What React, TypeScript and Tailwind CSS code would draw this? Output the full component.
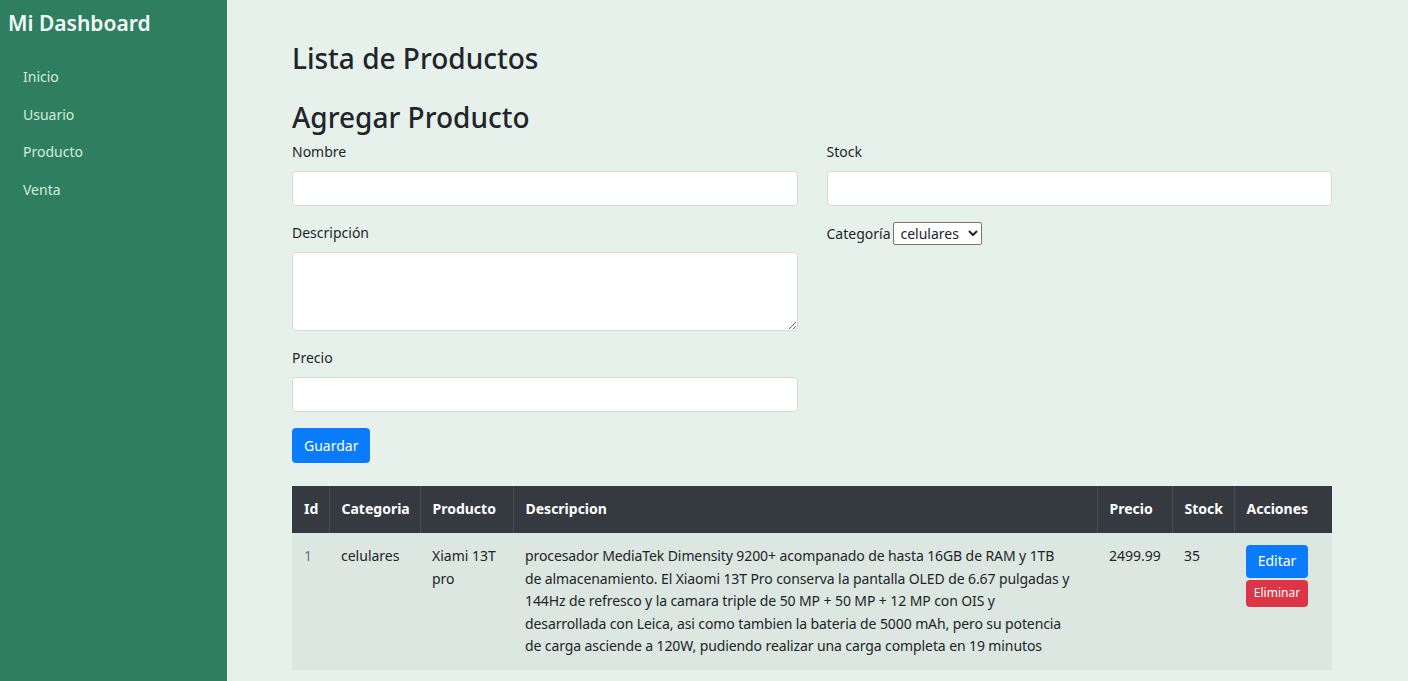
import React from 'react';

const navItems = ['Inicio', 'Usuario', 'Producto', 'Venta'];

const descLines = [
  'procesador MediaTek Dimensity 9200+ acompanado de hasta 16GB de RAM y 1TB',
  'de almacenamiento. El Xiaomi 13T Pro conserva la pantalla OLED de 6.67 pulgadas y',
  '144Hz de refresco y la camara triple de 50 MP + 50 MP + 12 MP con OIS y',
  'desarrollada con Leica, asi como tambien la bateria de 5000 mAh, pero su potencia',
  'de carga asciende a 120W, pudiendo realizar una carga completa en 19 minutos',
];

function Field({ label, tall }: { label: string; tall?: boolean }) {
  return (
    <div className="flex flex-col">
      <label className="text-[14px] leading-[22px] text-[#212529] mb-[8px]">{label}</label>
      {tall ? (
        <textarea className="h-[79px] w-full rounded-[4px] border border-[#d3dcd7] bg-white resize-y outline-none" />
      ) : (
        <input className="h-[35px] w-full rounded-[4px] border border-[#d3dcd7] bg-white outline-none" />
      )}
    </div>
  );
}

export default function App() {
  return (
    <div className="flex min-h-[681px] w-full bg-[#e7f1eb] font-['Noto_Sans',sans-serif] text-[#212529]">
      {/* Sidebar */}
      <aside className="w-[227px] shrink-0 bg-[#2f7e60] text-white">
        <h1 className="pl-[8px] pt-[8px] text-[21px] leading-[30px] font-semibold text-[#f4fbf7]">Mi Dashboard</h1>
        <nav className="mt-[28px] flex flex-col gap-[15px] pl-[23px]">
          {navItems.map(item => (
            <a key={item} className="text-[14px] leading-[22.5px] text-[#cfeedd]">{item}</a>
          ))}
        </nav>
      </aside>

      {/* Main */}
      <main className="flex-1 pl-[65px] pt-[38px]">
        <div className="w-[1040px]">
          <h2 className="text-[28px] leading-[40px] font-medium">Lista de Productos</h2>
          <h2 className="mt-[19px] text-[28px] leading-[40px] font-medium">Agregar Producto</h2>

          <div className="mt-[4px] grid grid-cols-2 gap-x-[29px]">
            <div className="flex flex-col gap-[16px]">
              <Field label="Nombre" />
              <Field label="Descripción" tall />
              <Field label="Precio" />
              <div>
                <button className="h-[35px] rounded-[4px] bg-[#0a7bfb] px-[12px] text-[14px] text-white">Guardar</button>
              </div>
            </div>
            <div className="flex flex-col gap-[16px]">
              <Field label="Stock" />
              <div className="flex items-center text-[14px]">
                <span>Categoría</span>
                <select className="ml-[3px] h-[23px] w-[89px] border border-[#767676] rounded-[2px] bg-white text-[14px] leading-[20px] pl-[2px]">
                  <option>celulares</option>
                </select>
              </div>
            </div>
          </div>

          <table className="mt-[23px] w-full table-fixed border-collapse text-[14px] leading-[22.5px]">
            <thead>
              <tr className="bg-[#343a40] text-white font-bold text-left h-[47px]">
                <th className="w-[37px] px-[12px] border-r border-[#454d55]">Id</th>
                <th className="w-[91px] px-[12px] border-r border-[#454d55]">Categoria</th>
                <th className="w-[93px] px-[12px] border-r border-[#454d55]">Producto</th>
                <th className="w-[584px] px-[12px] border-r border-[#454d55]">Descripcion</th>
                <th className="w-[75px] px-[12px] border-r border-[#454d55]">Precio</th>
                <th className="w-[62px] px-[12px] border-r border-[#454d55]">Stock</th>
                <th className="px-[12px]">Acciones</th>
              </tr>
            </thead>
            <tbody>
              <tr className="bg-[#dbe7e0] align-top">
                <td className="px-[12px] pt-[12px] pb-[12px] text-[#6c757d]">1</td>
                <td className="px-[12px] pt-[12px]">celulares</td>
                <td className="px-[12px] pt-[12px]">Xiami 13T pro</td>
                <td className="px-[12px] pt-[12px] pb-[12px] tracking-[-0.1px]">
                  {descLines.map(l => (
                    <span key={l} className="block whitespace-nowrap">{l}</span>
                  ))}
                </td>
                <td className="px-[12px] pt-[12px]">2499.99</td>
                <td className="px-[12px] pt-[12px]">35</td>
                <td className="px-[12px] pt-[12px]">
                  <div className="flex flex-col gap-[2px] w-[62px]">
                    <button className="h-[33px] rounded-[4px] bg-[#0a7bfb] text-[14px] text-white">Editar</button>
                    <button className="h-[27px] rounded-[4px] bg-[#dc3545] text-[12px] text-white">Eliminar</button>
                  </div>
                </td>
              </tr>
            </tbody>
          </table>
        </div>
      </main>
    </div>
  );
}
